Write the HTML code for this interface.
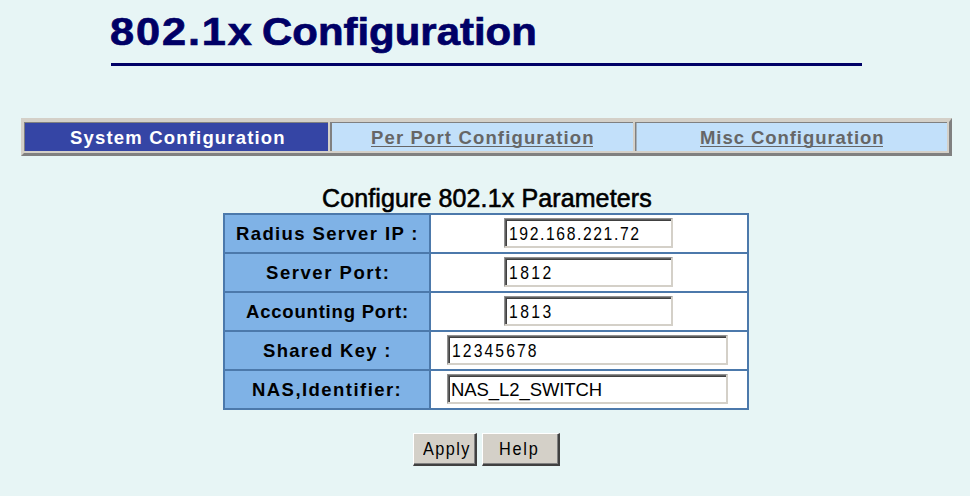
<!DOCTYPE html>
<html><head><meta charset="utf-8">
<style>
html,body{margin:0;padding:0;}
body{width:970px;height:496px;background:#e7f5f5;position:relative;overflow:hidden;font-family:"Liberation Sans",sans-serif;}
.a{position:absolute;white-space:nowrap;}
#title,#title2{top:8px;font-weight:bold;font-size:38.4px;color:#000066;line-height:48px;transform-origin:0 0;-webkit-text-stroke:0.7px #000066;}
#title{transform:scaleX(1.128);}
#title2{transform:scaleX(1.092);}
#uline{left:111px;top:63px;width:751px;height:3px;background:#000066;}
#tabs{left:21px;top:118px;width:931px;height:38px;background:#d4d0c8;box-sizing:border-box;border-style:solid;border-width:4px 3px 3px 3px;border-color:#d4d0c8 #808080 #808080 #d4d0c8;}
.tc{position:absolute;top:122px;height:29px;box-sizing:border-box;border-top:1px solid #808080;}
#t1{left:24px;width:304px;border-left:1px solid #808080;background:#3545a5;}
#t2{left:330px;width:303px;border-left:2px solid #808080;background:#c2e0fa;}
#t3{left:635px;width:312px;border-left:1px solid #808080;box-shadow:inset 1px 0 0 #a1b0bd;background:#c2e0fa;}
.tt{position:absolute;top:124px;font-weight:bold;font-size:18.5px;line-height:28px;white-space:nowrap;}
.ul{position:absolute;height:1px;background:#666;}
#cap{left:322px;top:184px;font-size:25px;line-height:29px;color:#000;letter-spacing:0.12px;-webkit-text-stroke:0.6px #000;}
#ftab{left:223px;top:213px;width:526px;height:197px;background:#4c79ab;}
.lc{position:absolute;left:225px;width:204px;height:37px;background:#7fb2e6;}
.rc{position:absolute;left:431px;width:316px;height:37px;background:#fff;}
.lt{position:absolute;font-weight:bold;font-size:18.5px;line-height:37px;color:#000;white-space:nowrap;}
.inp{position:absolute;box-sizing:border-box;height:30px;background:#fff;border-top:1px solid #909090;border-left:1px solid #909090;border-bottom:2px solid #d4d0c8;border-right:2px solid #d4d0c8;box-shadow:inset 1px 1px 0 #606060, inset 2px 2px 0 #404040;}
.it{position:absolute;font-size:18.5px;line-height:32px;transform:scaleX(0.85);transform-origin:0 0;color:#000;white-space:nowrap;}
.btn{position:absolute;top:433px;height:33px;box-sizing:border-box;background:#d4d0c8;border-top:1px solid #fff;border-left:1px solid #fff;border-right:2px solid #404040;border-bottom:2px solid #404040;box-shadow:inset -1px -1px 0 #808080;}
.bt{position:absolute;font-size:18.5px;line-height:31px;color:#000;white-space:nowrap;transform:scaleX(0.88);transform-origin:0 0;}
</style></head><body>
<div id="title" class="a" style="left:110px;letter-spacing:1.68px">802.1x</div>
<div id="title2" class="a" style="left:262px">Configuration</div>
<div id="uline" class="a"></div>

<div id="tabs" class="a"></div>
<div id="t1" class="tc"></div>
<div id="t2" class="tc"></div>
<div id="t3" class="tc"></div>
<div class="tt" style="left:70px;color:#fff;letter-spacing:1.18px">System Configuration</div>
<div class="tt" style="left:371px;color:#666;letter-spacing:1.15px">Per Port Configuration</div>
<div class="ul" style="left:371px;top:146px;width:222px"></div>
<div class="tt" style="left:700px;color:#666;letter-spacing:0.94px">Misc Configuration</div>
<div class="ul" style="left:700px;top:146px;width:183px"></div>

<div id="cap" class="a">Configure 802.1x Parameters</div>
<div id="ftab" class="a"></div>
<div class="lc" style="top:215px"></div><div class="rc" style="top:215px"></div>
<div class="lc" style="top:254px"></div><div class="rc" style="top:254px"></div>
<div class="lc" style="top:293px"></div><div class="rc" style="top:293px"></div>
<div class="lc" style="top:332px"></div><div class="rc" style="top:332px"></div>
<div class="lc" style="top:371px"></div><div class="rc" style="top:371px"></div>
<div class="lt" style="left:236px;top:215px;letter-spacing:1.38px">Radius Server IP :</div>
<div class="lt" style="left:266px;top:254px;letter-spacing:1.55px">Server Port:</div>
<div class="lt" style="left:246px;top:293px;letter-spacing:0.8px">Accounting Port:</div>
<div class="lt" style="left:263px;top:332px;letter-spacing:1.31px">Shared Key :</div>
<div class="lt" style="left:252px;top:371px;letter-spacing:1.45px">NAS,Identifier:</div>

<div class="inp" style="left:504px;top:218px;width:169px"></div>
<div class="inp" style="left:504px;top:257px;width:169px"></div>
<div class="inp" style="left:504px;top:296px;width:169px"></div>
<div class="inp" style="left:447px;top:335px;width:281px"></div>
<div class="inp" style="left:447px;top:374px;width:281px"></div>
<div class="it" style="left:509px;top:218px;letter-spacing:1.87px">192.168.221.72</div>
<div class="it" style="left:509px;top:257px;letter-spacing:2.83px">1812</div>
<div class="it" style="left:509px;top:296px;letter-spacing:2.83px">1813</div>
<div class="it" style="left:452px;top:335px;letter-spacing:2.45px">12345678</div>
<div class="it" style="left:451px;top:374px;letter-spacing:-0.08px;transform:none">NAS_L2_SWITCH</div>

<div class="btn" style="left:413px;width:64px"></div>
<div class="btn" style="left:482px;width:78px"></div>
<div class="bt" style="left:423px;top:433px;letter-spacing:1.6px">Apply</div>
<div class="bt" style="left:499px;top:433px;letter-spacing:2.0px">Help</div>
</body></html>
